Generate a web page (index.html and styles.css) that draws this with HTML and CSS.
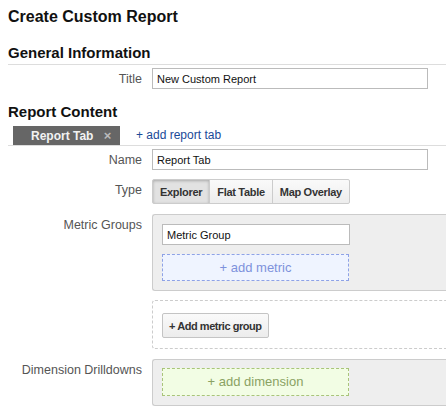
FILE: index.html
```html
<!DOCTYPE html>
<html>
  <head>
    <title>Create Custom Report</title>
    <link rel="stylesheet" href="styles.css">
  </head>
  <body>
    <h1 class="page-title">Create Custom Report</h1>

    <h2 class="section-title section-first">General Information</h2>
    <div class="row row-title">
      <label class="row-label" for="title">Title</label>
      <input class="text-input" type="text" id="title" value="New Custom Report" />
    </div>

    <h2 class="section-title section-content">Report Content</h2>
    <div class="tab-bar">
      <div class="tab">Report Tab <span class="tab-close">&#215;</span></div>
      <a class="add-tab" href="#">+ add report tab</a>
    </div>

    <div class="row row-name">
      <label class="row-label" for="name">Name</label>
      <input class="text-input" type="text" id="name" value="Report Tab" />
    </div>

    <div class="row row-type">
      <span class="row-label">Type</span>
      <div class="type-group">
        <button class="type-button selected" type="button">Explorer</button>
        <button class="type-button" type="button">Flat Table</button>
        <button class="type-button" type="button">Map Overlay</button>
      </div>
    </div>

    <div class="row row-metrics">
      <span class="row-label">Metric Groups</span>
      <div class="group-box">
        <input class="text-input group-input" type="text" value="Metric Group" />
        <div class="drop-zone metric-zone">+ add metric</div>
      </div>
    </div>

    <div class="row row-add-group">
      <span class="row-label"></span>
      <div class="new-group-box">
        <button class="plain-button" type="button">+ Add metric group</button>
      </div>
    </div>

    <div class="row row-dimensions">
      <span class="row-label">Dimension Drilldowns</span>
      <div class="group-box">
        <div class="drop-zone dimension-zone">+ add dimension</div>
      </div>
    </div>
  </body>
</html>
```

FILE: styles.css
```css
html {
  overflow: hidden;
}
body {
  margin: 0;
  padding: 8px 0 0 8px;
  font-family: "Liberation Sans", Arial, Helvetica, sans-serif;
  font-size: 12px;
  color: #222;
  background-color: #fff;
}

.page-title {
  margin: 0;
  font-size: 16px;
  line-height: 18px;
  font-weight: bold;
  color: #111;
}
.section-title {
  margin: 0;
  font-size: 15px;
  line-height: 16px;
  font-weight: bold;
  color: #111;
}
.section-first {
  margin-top: 19px;
  padding-bottom: 3px;
  border-bottom: 1px solid #ddd;
}
.section-content {
  margin-top: 15px;
}

.row {
  display: flex;
  align-items: flex-start;
}
.row-label {
  flex: 0 0 134px;
  padding: 4px 10px 0 0;
  line-height: 15px;
  text-align: right;
  color: #555;
  font-size: 12.5px;
}
.row-title {
  margin-top: 3px;
}
.row-name {
  margin-top: 3px;
}
.row-type {
  margin-top: 9px;
}
.row-metrics {
  margin-top: 10px;
}
.row-add-group {
  margin-top: 9px;
}
.row-dimensions {
  margin-top: 10px;
}

.text-input {
  box-sizing: border-box;
  flex-shrink: 0;
  width: 276px;
  height: 21px;
  padding: 0 4px;
  border: 1px solid #bbb;
  font-family: inherit;
  font-size: 11px;
  color: #111;
  background-color: #fff;
}

/* tabs */
.tab-bar {
  display: flex;
  align-items: flex-end;
  height: 19px;
  margin-top: 6px;
  border-bottom: 1px solid #ddd;
}
.tab {
  box-sizing: border-box;
  width: 107px;
  height: 19px;
  margin-left: 5px;
  padding-left: 18px;
  line-height: 19px;
  background-color: #666;
  color: #f2f2f2;
  font-weight: bold;
  font-size: 12px;
}
.tab-close {
  margin-left: 7px;
  color: #bbb;
  font-size: 13px;
}
.add-tab {
  margin-left: 16px;
  line-height: 19px;
  color: #1a4a98;
  text-decoration: none;
  font-size: 12px;
}

/* type switch */
.type-group {
  display: flex;
  flex-shrink: 0;
}
.type-button {
  height: 25px;
  padding: 0 7px;
  margin: 0 0 0 -1px;
  border: 1px solid #ccc;
  background: linear-gradient(#fafafa, #ededed);
  font-family: inherit;
  font-size: 11px;
  font-weight: bold;
  letter-spacing: -0.3px;
  color: #333;
}
.type-button:first-child {
  margin-left: 0;
  border-radius: 2px 0 0 2px;
}
.type-button:last-child {
  border-radius: 0 2px 2px 0;
}
.type-button.selected {
  background: #e2e2e2;
  box-shadow: inset 0 1px 3px rgba(0, 0, 0, 0.25);
}

/* groups: they run on past the right edge, so no right border */
.group-box,
.new-group-box {
  box-sizing: border-box;
  flex: 1;
  min-width: 0;
  border-right: none;
  border-radius: 3px 0 0 3px;
}
.group-box {
  padding: 9px;
  border: 1px solid #ccc;
  border-right: none;
  background-color: #eee;
}
.row-dimensions .group-box {
  padding-top: 8px;
}
.group-input {
  width: 188px;
  display: block;
}
.drop-zone {
  box-sizing: border-box;
  width: 187px;
  height: 27px;
  line-height: 25px;
  text-align: center;
  font-size: 13px;
}
.metric-zone {
  margin-top: 9px;
  border: 1px dashed #8ea2e6;
  background-color: #eff4ff;
  color: #7e92dc;
}
.dimension-zone {
  height: 28px;
  line-height: 26px;
  border: 1px dashed #a9c47a;
  background-color: #f2fde4;
  color: #8aa263;
}

.new-group-box {
  height: 49px;
  padding: 12px 9px 0;
  border: 1px dashed #ccc;
  border-right: none;
}
.plain-button {
  height: 25px;
  padding: 0 6px;
  border: 1px solid #c4c4c4;
  border-radius: 2px;
  background: linear-gradient(#fafafa, #ececec);
  font-family: inherit;
  font-size: 11px;
  font-weight: bold;
  letter-spacing: -0.45px;
  color: #333;
}
```
